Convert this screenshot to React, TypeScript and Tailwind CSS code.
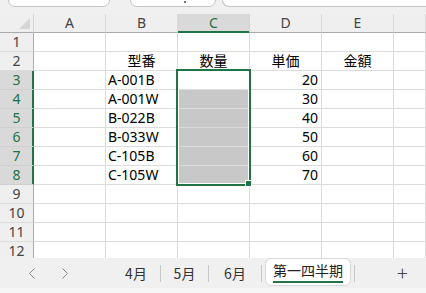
import React from "react";

const GREEN = "#217346";

type Row = { B?: string; C?: string; D?: string; E?: string };

const DATA: Record<number, Row> = {
  2: { B: "型番", C: "数量", D: "単価", E: "金額" },
  3: { B: "A-001B", D: "20" },
  4: { B: "A-001W", D: "30" },
  5: { B: "B-022B", D: "40" },
  6: { B: "B-033W", D: "50" },
  7: { B: "C-105B", D: "60" },
  8: { B: "C-105W", D: "70" },
};

const COLS = ["A", "B", "C", "D", "E", ""] as const;

function isSelected(r: number) {
  return r >= 3 && r <= 8;
}

function Cell({ row, col }: { row: number; col: string }) {
  const data = DATA[row] || {};
  const value = col ? (data as Record<string, string | undefined>)[col] : undefined;
  const header = row === 2;
  const gray = col === "C" && row >= 4 && row <= 8;
  const align = header
    ? "justify-center"
    : col === "D"
    ? "justify-end pr-[3px]"
    : "justify-start pl-[2px]";
  return (
    <div
      className={`flex h-[19px] items-center border-r border-b border-[#dcdcdc] text-[14px] leading-none text-black ${align} ${
        gray ? "bg-[#c8c8c8]" : "bg-white"
      }`}
    >
      {value}
    </div>
  );
}

function Chevron({ dir }: { dir: "left" | "right" }) {
  return (
    <svg width="8" height="11" viewBox="0 0 8 11" fill="none">
      <polyline
        points={dir === "left" ? "6.5,0.5 1.5,5.5 6.5,10.5" : "1.5,0.5 6.5,5.5 1.5,10.5"}
        stroke="#8a8a8a"
        strokeWidth="1"
      />
    </svg>
  );
}

function Sep() {
  return <div className="h-[17px] w-px bg-[#c8c8c8]" />;
}

export default function App() {
  const rows = Array.from({ length: 12 }, (_, i) => i + 1);

  return (
    <div className="flex h-[293px] w-[426px] flex-col overflow-hidden bg-[#f0f0f0] font-['Noto_Sans','Noto_Sans_CJK_JP',sans-serif]">
      {/* formula bar remains */}
      <div className="relative h-[14px] shrink-0">
        <div className="flex h-[7px] items-end">
          <div className="ml-[8px] h-[20px] w-[102px] self-end rounded-b-[7px] border border-[#c4c4c4] bg-white" />
          <div className="relative ml-[20px] h-[20px] w-[86px] self-end rounded-b-[7px] border border-[#c4c4c4] bg-white">
            <div className="absolute bottom-[3px] left-[53px] h-[2px] w-[2px] rounded-full bg-[#444]" />
          </div>
          <div className="ml-[6px] h-[20px] flex-1 self-end rounded-bl-[7px] border border-r-0 border-[#c4c4c4] bg-white" />
        </div>
      </div>

      {/* grid */}
      <div className="relative h-[244px] shrink-0 overflow-hidden">
        <div className="grid grid-cols-[34px_72px_72px_72px_72px_72px_1fr]">
          <div className="relative h-[19px] border-r border-b border-r-[#d4d4d4] border-b-[#ababab] bg-[#efefef]">
            <svg className="absolute right-[3px] bottom-[3px]" width="11" height="11" viewBox="0 0 11 11">
              <polygon points="11,0 11,11 0,11" fill="#d6d6d6" />
            </svg>
          </div>
          {COLS.map((c) =>
            c === "C" ? (
              <div
                key={c}
                className="flex h-[19px] items-center justify-center border-r border-b border-r-[#d4d4d4] border-b-[#217346] bg-[#d9d9d9] text-[14px] leading-none text-[#217346] shadow-[inset_0_-1px_0_#217346]"
              >
                {c}
              </div>
            ) : (
              <div
                key={c || "F"}
                className="flex h-[19px] items-center justify-center border-r border-b border-r-[#dadada] border-b-[#ababab] bg-[#efefef] text-[14px] leading-none text-[#444]"
              >
                {c}
              </div>
            )
          )}

          {rows.map((r) => (
            <React.Fragment key={r}>
              {isSelected(r) ? (
                <div className="flex h-[19px] items-center justify-center border-r border-b border-r-[#217346] border-b-[#cfcfcf] bg-[#d9d9d9] text-[14px] leading-none text-[#217346] shadow-[inset_-1px_0_0_#217346]">
                  {r}
                </div>
              ) : (
                <div className="flex h-[19px] items-center justify-center border-r border-b border-r-[#ababab] border-b-[#dcdcdc] bg-[#efefef] text-[14px] leading-none text-[#444]">
                  {r}
                </div>
              )}
              {COLS.map((c) => (
                <Cell key={c || "F"} row={r} col={c} />
              ))}
            </React.Fragment>
          ))}
        </div>

        {/* selection C3:C8 */}
        <div
          className="pointer-events-none absolute left-[176px] top-[55px] h-[117px] w-[75px] border-2 shadow-[inset_0_0_0_1px_white]"
          style={{ borderColor: GREEN }}
        />
        <div className="absolute left-[245px] top-[166px] h-[7px] w-[7px] border border-white bg-[#217346]" />
      </div>

      {/* sheet tabs */}
      <div className="flex h-[30px] shrink-0 items-center bg-[#f0f0f0] text-[14px] text-[#333] font-['Noto_Sans_CJK_JP','Noto_Sans',sans-serif]">
        <div className="flex w-[112px] items-center gap-[25px] pl-[28px]">
          <Chevron dir="left" />
          <Chevron dir="right" />
        </div>
        <div className="flex w-[48px] justify-center">4月</div>
        <Sep />
        <div className="flex w-[47px] justify-center">5月</div>
        <Sep />
        <div className="flex w-[52px] justify-center">6月</div>
        <Sep />
        <div className="ml-[3px] flex h-[28px] w-[86px] flex-col items-center justify-center self-start rounded-[6px] border border-[#d8d8d8] bg-white text-[#222]">
          <span className="leading-[18px]">第一四半期</span>
          <span className="mt-[2px] h-[2px] w-[70px] bg-[#217346]" />
        </div>
        <div className="ml-[3px]">
          <Sep />
        </div>
        <div className="ml-[42px] text-[20px] font-light leading-none text-[#444]">+</div>
      </div>
      <div className="h-[5px] shrink-0 bg-[#f6f6f6]" />
    </div>
  );
}
